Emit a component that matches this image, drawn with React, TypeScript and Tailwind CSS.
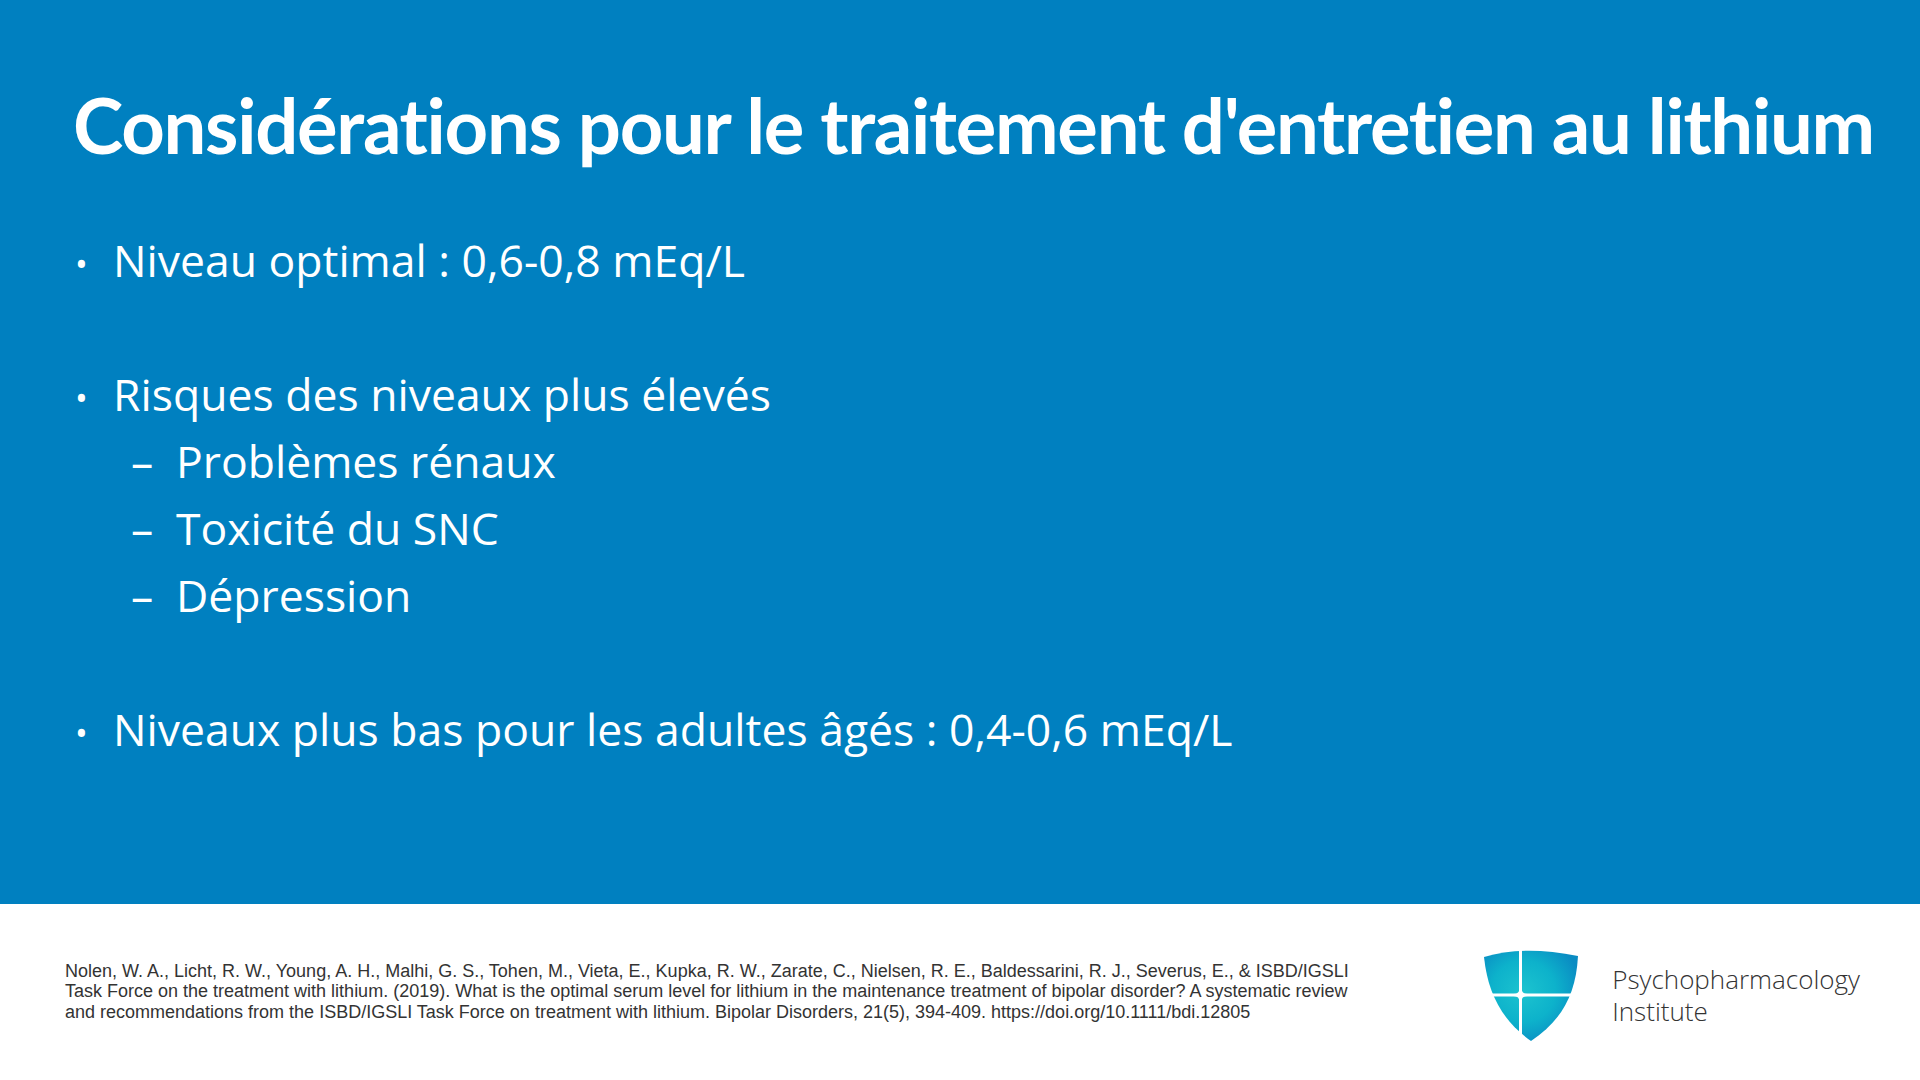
const Shield = () => (
  <svg width="96" height="93" viewBox="0 0 96 93" className="shrink-0">
    <defs>
      <radialGradient id="sg" cx="42%" cy="45%" r="62%">
        <stop offset="0%" stopColor="#1cc3cf" />
        <stop offset="55%" stopColor="#0db2cb" />
        <stop offset="100%" stopColor="#0a8cc3" />
      </radialGradient>
    </defs>
    <path d="M1 8 Q40 -4 95 7 C93 46 78 72 48 92 C20 72 5 46 1 8 Z" fill="url(#sg)" />
    <path d="M37.5 0 V93 M0 46 H96" stroke="#fff" strokeWidth="3" />
    <path d="M37.5 39 Q37.5 46 30.5 46 Q37.5 46 37.5 53 Q37.5 46 44.5 46 Q37.5 46 37.5 39 Z" fill="#fff" stroke="#fff" strokeWidth="2" />
  </svg>
);

const Bullet = ({ children }: { children: React.ReactNode }) => (
  <div className="flex items-baseline h-[67px]">
    <span className="w-[40px] pl-[2px] text-[34px]">•</span>
    <span>{children}</span>
  </div>
);

const Sub = ({ children }: { children: React.ReactNode }) => (
  <div className="flex items-baseline h-[67px] pl-[58px]">
    <span className="w-[45px]">–</span>
    <span>{children}</span>
  </div>
);

const App = () => {
  return (
    <div className="w-[1920px] h-[1080px] flex flex-col overflow-hidden">
      <div className="h-[904px] bg-[#0080c0] text-white px-[73px] pt-[77px]">
        <h1 className="text-[76px] leading-[96px] font-bold tracking-[-1.3px] whitespace-nowrap" style={{ fontFamily: 'Lato, "Open Sans", sans-serif' }}>
          Considérations pour le traitement d'entretien au lithium
        </h1>
        <div className="mt-[53px] text-[44.5px] leading-[67px]" style={{ fontFamily: '"Open Sans", sans-serif' }}>
          <Bullet>Niveau optimal : 0,6-0,8 mEq/L</Bullet>
          <div className="h-[67px]" />
          <Bullet>Risques des niveaux plus élevés</Bullet>
          <Sub>Problèmes rénaux</Sub>
          <Sub>Toxicité du SNC</Sub>
          <Sub>Dépression</Sub>
          <div className="h-[67px]" />
          <Bullet>Niveaux plus bas pour les adultes âgés : 0,4-0,6 mEq/L</Bullet>
        </div>
      </div>
      <div className="flex-1 bg-white flex items-center justify-between pl-[65px] pr-[60px]">
        <p className="text-[18px] leading-[20.3px] text-[#333] -mt-[1px] whitespace-nowrap" style={{ fontFamily: '"Liberation Sans", Arial, sans-serif' }}>
          Nolen, W. A., Licht, R. W., Young, A. H., Malhi, G. S., Tohen, M., Vieta, E., Kupka, R. W., Zarate, C., Nielsen, R. E., Baldessarini, R. J., Severus, E., &amp; ISBD/IGSLI
          <br />
          Task Force on the treatment with lithium. (2019). What is the optimal serum level for lithium in the maintenance treatment of bipolar disorder? A systematic review
          <br />
          and recommendations from the ISBD/IGSLI Task Force on treatment with lithium. Bipolar Disorders, 21(5), 394-409. https://doi.org/10.1111/bdi.12805
        </p>
        <div className="flex items-center gap-[33px] mt-[6px]">
          <Shield />
          <div className="flex flex-col text-[26px] text-[#333] font-light whitespace-nowrap" style={{ fontFamily: '"Open Sans", sans-serif' }}>
            <span className="leading-[32px]">Psychopharmacology</span>
            <span className="leading-[32px]">Institute</span>
          </div>
        </div>
      </div>
    </div>
  );
};

export default App;
